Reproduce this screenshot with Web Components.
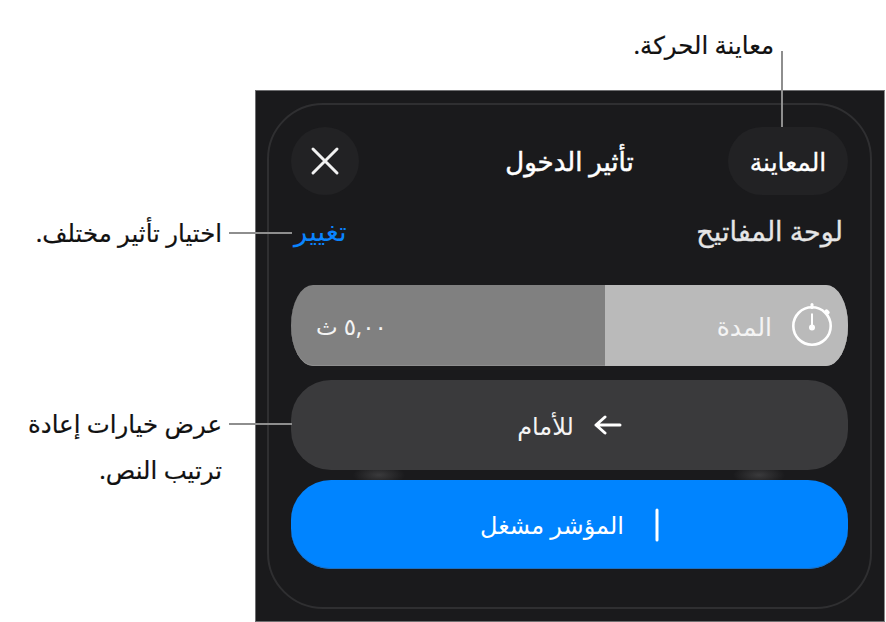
<!DOCTYPE html>
<html lang="ar">
<head>
<meta charset="utf-8">
<title>تأثير الدخول</title>
<style>
  html, body { margin: 0; height: 100%; background: #fff; overflow: hidden; }
  body { font-family: "Noto Sans", "DejaVu Sans", sans-serif; }
</style>
</head>
<body>
<guide-page>
  <guide-callout slot="top" side="top">معاينة الحركة.</guide-callout>
  <guide-callout slot="left" side="left">اختيار تأثير مختلف.</guide-callout>
  <guide-callout slot="left" side="left" style="margin-top:145px">عرض خيارات إعادة<br>ترتيب النص.</guide-callout>
  <effect-panel slot="panel"></effect-panel>
</guide-page>

<script>
// === <guide-page> ===
class GuidePage extends HTMLElement {
  constructor() {
    super();
    this.attachShadow({ mode: 'open' });
    this.shadowRoot.innerHTML = `
      <style>
        :host {
          display: grid;
          grid-template-columns: 255px 630px;
          grid-template-rows: 90px 532px;
          width: 886px;
          height: 622px;
        }
        .top {
          grid-column: 1 / 3;
          display: flex;
          justify-content: flex-end;
          padding: 22px 111px 0 0;
        }
        .left {
          display: flex;
          flex-direction: column;
          align-items: flex-end;
          padding: 120px 33px 0 0;
        }
      </style>
      <div class="top"><slot name="top"></slot></div>
      <div class="left"><slot name="left"></slot></div>
      <slot name="panel"></slot>
    `;
  }
}

// === <guide-callout> ===
class GuideCallout extends HTMLElement {
  constructor() {
    super();
    this.attachShadow({ mode: 'open' });
    this.shadowRoot.innerHTML = `
      <style>
        :host {
          display: block;
          position: relative;
          z-index: 2;
          direction: rtl;
          text-align: right;
          font-size: 24.4px;
          line-height: 46px;
          color: #111;
          white-space: nowrap;
          -webkit-text-stroke: 0.2px #111;
        }
        .leader { position: absolute; background: #8e8e8e; }
        :host([side="left"]) .leader { left: calc(100% + 7px); top: 22px; width: 63px; height: 2px; }
        :host([side="top"]) .leader { left: calc(100% + 7px); top: 29px; width: 2px; height: 76px; }
      </style>
      <slot></slot>
      <span class="leader"></span>
    `;
  }
}

// === <effect-panel> ===
class EffectPanel extends HTMLElement {
  constructor() {
    super();
    this.attachShadow({ mode: 'open' });
    this.shadowRoot.innerHTML = `
      <style>
        :host {
          display: block;
          background: #1a1a1c;
          border: 1px solid #6e6e70;
          border-right-color: #8a8a8a;
          box-sizing: border-box;
          padding: 12px 12px 12px 11px;
          direction: rtl;
          color: #fff;
        }
        .frame {
          box-sizing: border-box;
          height: 100%;
          border: 2px solid #2f2f31;
          border-radius: 56px;
          padding: 22px;
          display: flex;
          flex-direction: column;
        }
        header {
          display: grid;
          grid-template-columns: 1fr auto 1fr;
          align-items: center;
          height: 68px;
        }
        h1 { margin: 0; font-size: 26px; font-weight: 400; -webkit-text-stroke: 0.5px #fff; }
        .pill {
          justify-self: start;
          width: 120px;
          height: 68px;
          border-radius: 34px;
          background: #222224;
          display: flex;
          align-items: center;
          justify-content: center;
          font-size: 25px;
          -webkit-text-stroke: 0.3px #fff;
        }
        .close {
          justify-self: end;
          width: 68px;
          height: 68px;
          border-radius: 50%;
          background: #222224;
          display: flex;
          align-items: center;
          justify-content: center;
        }
        .type {
          height: 90px;
          flex: none;
          display: flex;
          align-items: center;
          justify-content: space-between;
          padding: 0 5px 20px 3px;
          box-sizing: border-box;
          font-size: 27px;
          color: #e6e6e6;
        }
        .type span:first-child { -webkit-text-stroke: 0.3px #e6e6e6; }
        .change { color: #0a84ff; font-size: 27.5px; }
        .glow {
          height: 10px;
          flex: none;
          background:
            radial-gradient(ellipse 26px 10px at 88px 5px, #3a3a3c, transparent),
            radial-gradient(ellipse 26px 10px at 468px 5px, #3a3a3c, transparent);
        }
      </style>
      <div class="frame">
        <header>
          <div class="pill">المعاينة</div>
          <h1>تأثير الدخول</h1>
          <div class="close">
            <svg width="30" height="30" viewBox="0 0 30 30" fill="none" stroke="#f2f2f2" stroke-width="3" stroke-linecap="round">
              <path d="M3 3 27 27M27 3 3 27"/>
            </svg>
          </div>
        </header>
        <div class="type"><span>لوحة المفاتيح</span><span class="change">تغيير</span></div>
        <duration-slider label="المدة" value="٥,٠٠ ث"></duration-slider>
        <option-row style="margin-top:14px;height:90px" label="للأمام" icon="arrow"></option-row>
        <div class="glow"></div>
        <option-row style="height:89px" label="المؤشر مشغل" icon="cursor" active></option-row>
      </div>
    `;
  }
}

// === <duration-slider> ===
class DurationSlider extends HTMLElement {
  static get observedAttributes() {
    return ['label', 'value'];
  }

  constructor() {
    super();
    this.attachShadow({ mode: 'open' });
    this.shadowRoot.innerHTML = `
      <style>
        :host {
          display: flex;
          height: 81px;
          flex: none;
          border-radius: 22px / 40px;
          overflow: hidden;
          background: #808080;
          box-shadow: inset 0 -1px #8f8f8f;
          direction: rtl;
          color: #f4f4f4;
        }
        .fill {
          width: 243px;
          background: #bababa;
          display: flex;
          align-items: center;
          gap: 20px;
          padding-right: 16px;
          box-sizing: border-box;
          font-size: 25px;
        }
        .value {
          flex: 1;
          display: flex;
          align-items: center;
          justify-content: flex-end;
          padding-left: 25px;
          font-size: 23px;
        }
        svg { flex: none; }
      </style>
      <div class="fill">
        <svg width="40" height="46" viewBox="0 0 40 46" fill="none" stroke="#fff">
          <circle cx="20" cy="23" r="18.7" stroke-width="2.6"/>
          <path d="M20 1.5V4.5" stroke-width="3" stroke-linecap="round"/>
          <path d="M34.5 8 36 9.5" stroke-width="3.4" stroke-linecap="round"/>
          <path d="M20 10.5V24" stroke-width="2"/>
          <circle cx="20" cy="24.5" r="3" fill="#fff" stroke="none"/>
        </svg>
        <span class="label"></span>
      </div>
      <div class="value"><span class="val"></span></div>
    `;
  }

  connectedCallback() {
    this._render();
  }

  attributeChangedCallback() {
    this._render();
  }

  _render() {
    this.shadowRoot.querySelector('.label').textContent = this.getAttribute('label') || '';
    this.shadowRoot.querySelector('.val').textContent = this.getAttribute('value') || '';
  }
}

// === <option-row> ===
class OptionRow extends HTMLElement {
  static get observedAttributes() {
    return ['label', 'icon'];
  }

  constructor() {
    super();
    this.attachShadow({ mode: 'open' });
    this.shadowRoot.innerHTML = `
      <style>
        :host {
          display: flex;
          flex: none;
          align-items: center;
          justify-content: center;
          gap: 20px;
          border-radius: 40px;
          background: #3a3a3c;
          direction: rtl;
          font-size: 24px;
          color: #f4f4f4;
        }
        :host([active]) {
          background: #0084ff;
          box-shadow: inset 0 -1px #1c6fc0;
          color: #fff;
          gap: 31px;
        }
        .icon { display: flex; }
      </style>
      <span class="icon"></span>
      <span class="label"></span>
    `;
  }

  connectedCallback() {
    this._render();
  }

  attributeChangedCallback() {
    this._render();
  }

  _render() {
    const icons = {
      arrow: `<svg width="28" height="20" viewBox="0 0 28 20" fill="none" stroke="#fff" stroke-width="3" stroke-linecap="round" stroke-linejoin="round"><path d="M2 10H26M11 2 2 10 11 18"/></svg>`,
      cursor: `<svg width="4" height="34" viewBox="0 0 4 34" fill="none" stroke="#fff" stroke-width="3" stroke-linecap="round"><path d="M2 2V32"/></svg>`
    };
    this.shadowRoot.querySelector('.icon').innerHTML = icons[this.getAttribute('icon')] || '';
    this.shadowRoot.querySelector('.label').textContent = this.getAttribute('label') || '';
  }
}

customElements.define('guide-page', GuidePage);
customElements.define('guide-callout', GuideCallout);
customElements.define('effect-panel', EffectPanel);
customElements.define('duration-slider', DurationSlider);
customElements.define('option-row', OptionRow);
</script>
</body>
</html>
